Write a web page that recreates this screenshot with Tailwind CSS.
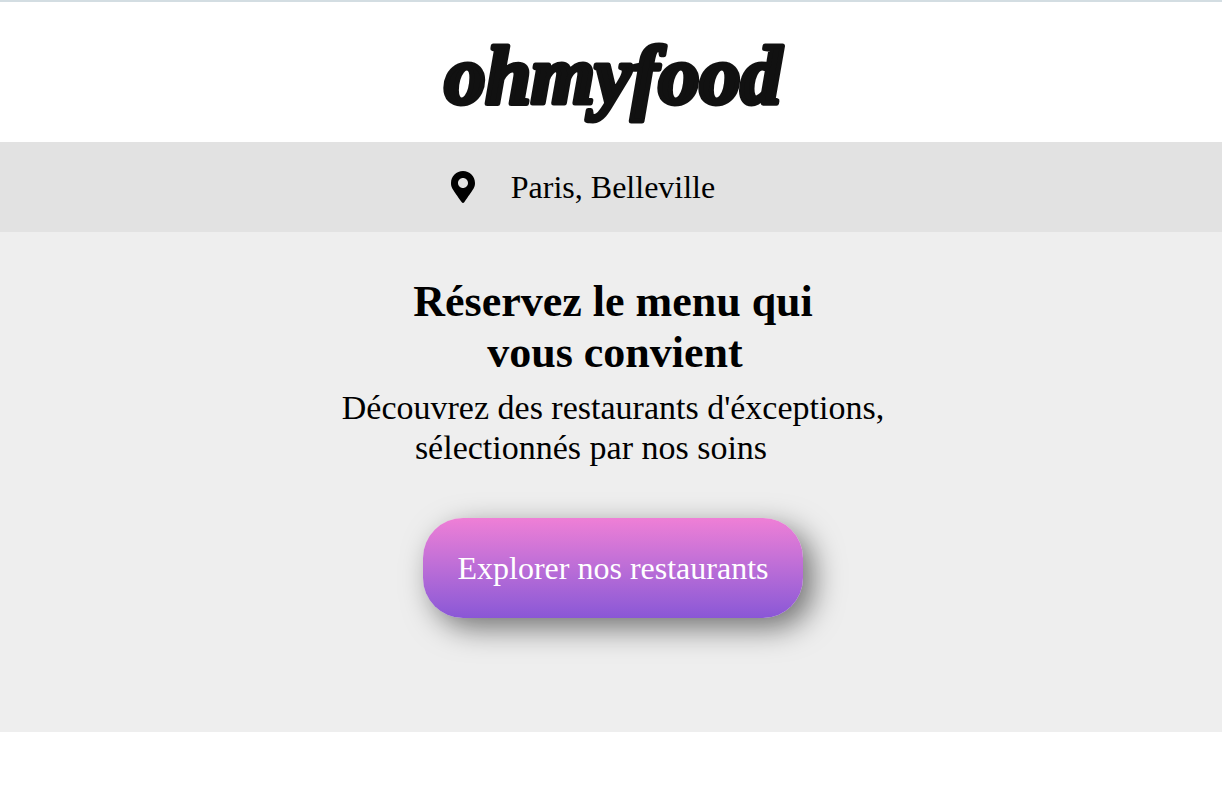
<!DOCTYPE html>
<html lang="fr">
<head>
<meta charset="utf-8">
<meta name="viewport" content="width=device-width, initial-scale=1">
<title>ohmyfood</title>
<script src="https://cdn.jsdelivr.net/npm/@tailwindcss/browser@4"></script>
</head>
<body class="bg-white font-['Liberation_Serif',serif] text-black">
<header class="flex h-[142px] items-center justify-center border-t-2 border-[#d3dde2] pl-1">
  <a href="#">
    <svg class="h-24 w-[360px] overflow-visible" viewBox="0 0 360 96">
      <text x="180" y="79" text-anchor="middle" font-family="Liberation Serif, serif" font-size="82" font-weight="700" font-style="italic" fill="#111" stroke="#111" stroke-width="5" stroke-linejoin="round">ohmyfood</text>
    </svg>
  </a>
</header>
<main>
  <div class="flex h-[90px] items-center justify-center gap-9 bg-[#e2e2e2] pr-[56px]">
    <svg class="h-8 w-6" viewBox="0 0 384 512" fill="currentColor" aria-hidden="true"><path d="M172.268 501.67C26.97 291.031 0 269.413 0 192 0 85.961 85.961 0 192 0s192 85.961 192 192c0 77.413-26.97 99.031-172.268 309.67-9.535 13.774-29.93 13.773-39.464 0zM192 272c44.183 0 80-35.817 80-80s-35.817-80-80-80-80 35.817-80 80 35.817 80 80 80z"/></svg>
    <p class="text-[32px] leading-9">Paris, Belleville</p>
  </div>
  <section class="flex h-[500px] flex-col items-center bg-[#eee] pt-11 pl-1 text-center">
    <h1 class="text-[44px] leading-[51px] font-bold"><span class="block">Réservez le menu qui</span><span class="block pl-1">vous convient</span></h1>
    <p class="mt-[10px] text-[34px] leading-10"><span class="block">Découvrez des restaurants d'éxceptions,</span><span class="block pr-11">sélectionnés par nos soins</span></p>
    <button type="button" class="mt-[50px] h-[100px] rounded-[40px] bg-linear-to-b from-[#ef7fd6] to-[#8a57d6] px-[34px] text-[32px] text-white shadow-[10px_10px_30px_rgba(0,0,0,0.52)]">Explorer nos restaurants</button>
  </section>
</main>
</body>
</html>
